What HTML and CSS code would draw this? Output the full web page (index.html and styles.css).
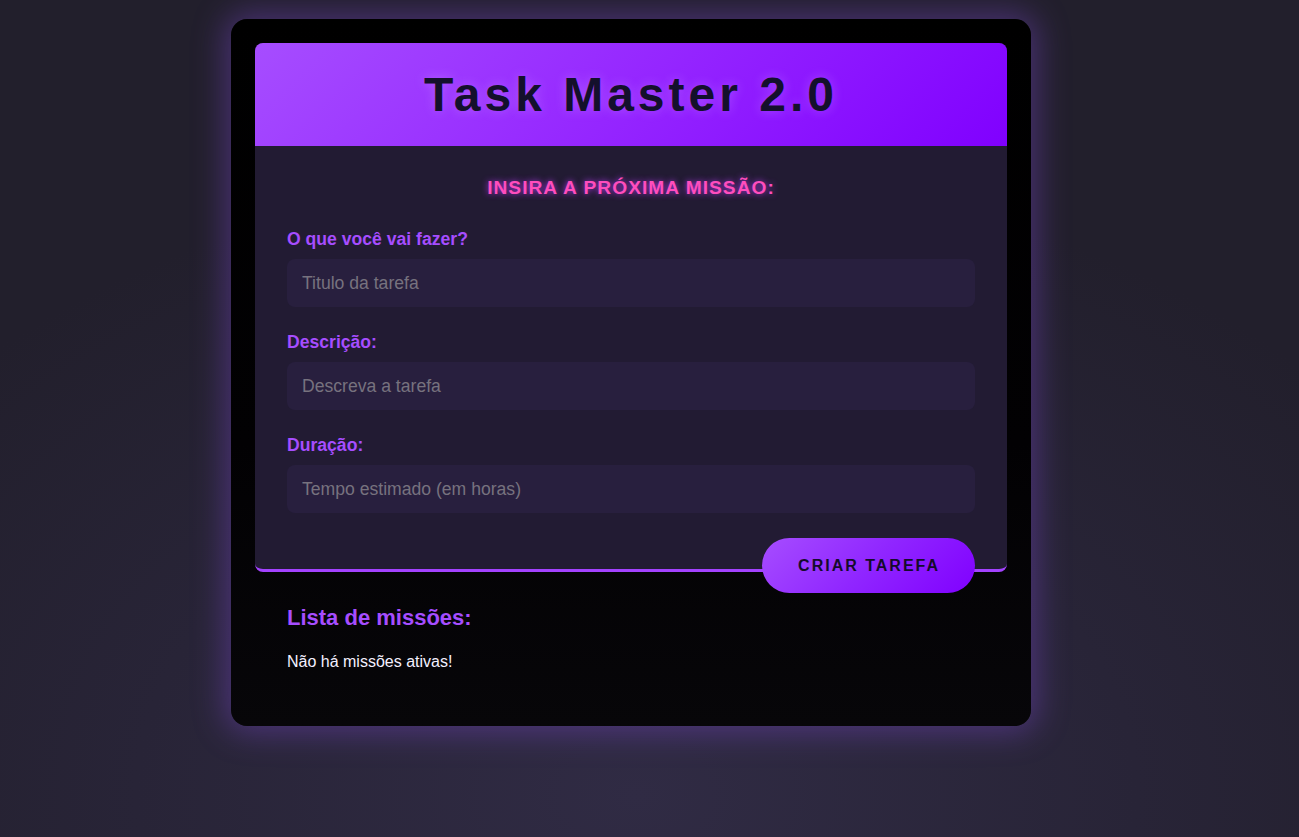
FILE: index.html
```html
<!DOCTYPE html>
<html lang="pt-BR">
<head>
<meta charset="utf-8">
<title>Task Master 2.0</title>
<link rel="stylesheet" href="styles.css">
</head>
<body>
<main class="card">
  <section class="panel">
    <header class="panel-header">
      <h1 class="title">Task Master 2.0</h1>
    </header>
    <form class="panel-body">
      <h2 class="subtitle">INSIRA A PRÓXIMA MISSÃO:</h2>
      <div class="field">
        <label class="field-label" for="t">O que você vai fazer?</label>
        <input class="field-input" id="t" type="text" placeholder="Titulo da tarefa">
      </div>
      <div class="field">
        <label class="field-label" for="d">Descrição:</label>
        <input class="field-input" id="d" type="text" placeholder="Descreva a tarefa">
      </div>
      <div class="field field-last">
        <label class="field-label" for="h">Duração:</label>
        <input class="field-input" id="h" type="text" placeholder="Tempo estimado (em horas)">
      </div>
      <div class="actions">
        <button class="btn" type="button">CRIAR TAREFA</button>
      </div>
    </form>
  </section>
  <section class="list">
    <h3 class="list-title">Lista de missões:</h3>
    <p class="list-empty">Não há missões ativas!</p>
  </section>
</main>
</body>
</html>
```
FILE: styles.css
```css
* { box-sizing: border-box; }
html, body { height: 100%; }
body {
  margin: 0;
  padding: 19px 37px 0 0;
  font-family: "Liberation Sans", Arial, sans-serif;
  background: radial-gradient(ellipse 70% 75% at 49% 95%, #302b44 0%, #282437 55%, #221f2c 100%);
  background-color: #262333;
  min-height: 837px;
}
.card {
  width: 800px;
  margin: 0 auto;
  padding: 24px 24px 55px;
  border-radius: 16px;
  background: linear-gradient(180deg, #000 0%, #020103 60%, #070609 100%);
  box-shadow: 0 0 32px 6px rgba(120, 70, 200, 0.45);
}
.panel {
  border-radius: 8px;
  background: #221b33;
  border-bottom: 3px solid #a342ff;
}
.panel-header {
  padding: 24px 0;
  border-radius: 8px 8px 0 0;
  background: linear-gradient(135deg, #a64dff 0%, #9526ff 50%, #8000ff 100%);
  text-align: center;
}
.title {
  margin: 0;
  font-size: 48px;
  line-height: 55px;
  font-weight: 700;
  letter-spacing: 4px;
  color: #14102c;
  text-shadow: 0 0 12px rgba(230, 190, 255, 0.3);
}
.panel-body {
  padding: 31px 32px 0;
  display: flex;
  flex-direction: column;
}
.subtitle {
  margin: 0 0 30px;
  text-align: center;
  font-size: 19.2px;
  line-height: 22px;
  font-weight: 700;
  letter-spacing: 1px;
  color: #ff4dbd;
  text-shadow: 0 0 6px rgba(190, 60, 255, 0.9);
}
.field { display: flex; flex-direction: column; margin-bottom: 25px; }
.field-last { margin-bottom: 0; }
.field-label {
  font-size: 17.6px;
  line-height: 20px;
  font-weight: 700;
  color: #a64dff;
  margin-bottom: 10px;
}
.field-input {
  height: 48px;
  padding: 0 15px;
  border: none;
  border-radius: 8px;
  background: #281f3e;
  color: #ddd;
  font-family: "Liberation Sans", Arial, sans-serif;
  font-size: 17.6px;
  outline: none;
}
.field-input::placeholder { color: #77727e; }
.actions {
  display: flex;
  justify-content: flex-end;
  margin-top: 25px;
  margin-bottom: -24px;
}
.btn {
  height: 55px;
  padding: 0 35px 0 36px;
  border: none;
  border-radius: 28px;
  background: linear-gradient(135deg, #a64dff 0%, #9026ff 50%, #8000ff 100%);
  color: #150b2c;
  font-family: "Liberation Sans", Arial, sans-serif;
  font-size: 16px;
  font-weight: 700;
  letter-spacing: 2px;
  cursor: pointer;
}
.list { padding: 33px 32px 0; }
.list-title {
  margin: 0;
  font-size: 22px;
  line-height: 25px;
  font-weight: 700;
  color: #a64dff;
}
.list-empty {
  margin: 23px 0 0;
  font-size: 16px;
  line-height: 18px;
  color: #f4f0ff;
}
```
